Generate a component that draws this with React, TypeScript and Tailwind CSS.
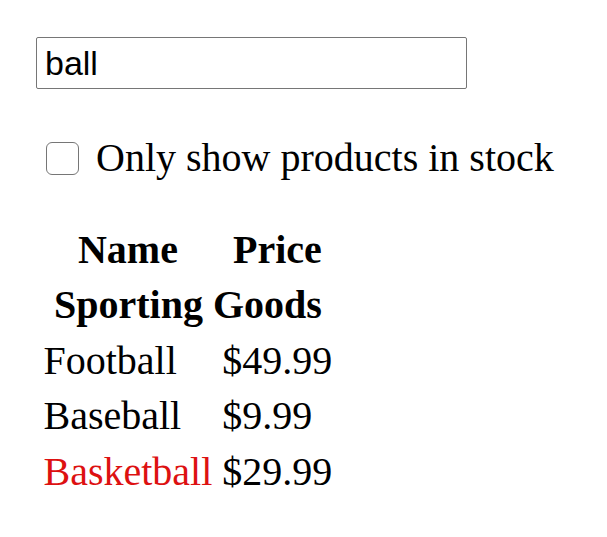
import React from "react";

const rows = [
  { name: "Football", price: "$49.99", stocked: true },
  { name: "Baseball", price: "$9.99", stocked: true },
  { name: "Basketball", price: "$29.99", stocked: false },
];

export default function App() {
  return (
    <div className="min-h-screen bg-white pl-[36px] pt-[37px] text-black">
      <input
        type="text"
        defaultValue="ball"
        className="block h-[52px] w-[431px] rounded-[2px] border border-[#767676] px-[8px] text-[34px] font-['Liberation_Sans',Arial,sans-serif] text-black outline-none"
      />
      <label className="mt-[46px] flex h-[46px] items-center font-['Liberation_Serif','Times_New_Roman',serif] text-[40px] leading-[46px]">
        <span className="ml-[10px] mr-[17px] block h-[33px] w-[33px] rounded-[6px] border border-[#767676] bg-white" />
        <span>Only show products in stock</span>
      </label>
      <table className="mt-[38px] border-separate border-spacing-[5px] font-['Liberation_Serif','Times_New_Roman',serif] text-[40px] leading-[45.5px]">
        <thead>
          <tr>
            <th className="p-[2.5px] font-bold">Name</th>
            <th className="p-[2.5px] font-bold">Price</th>
          </tr>
        </thead>
        <tbody>
          <tr>
            <th colSpan={2} className="p-[2.5px] font-bold">
              Sporting Goods
            </th>
          </tr>
          {rows.map((r) => (
            <tr key={r.name}>
              <td className="p-[2.5px]">
                {r.stocked ? r.name : <span className="text-[#dd1111]">{r.name}</span>}
              </td>
              <td className="p-[2.5px]">{r.price}</td>
            </tr>
          ))}
        </tbody>
      </table>
    </div>
  );
}
